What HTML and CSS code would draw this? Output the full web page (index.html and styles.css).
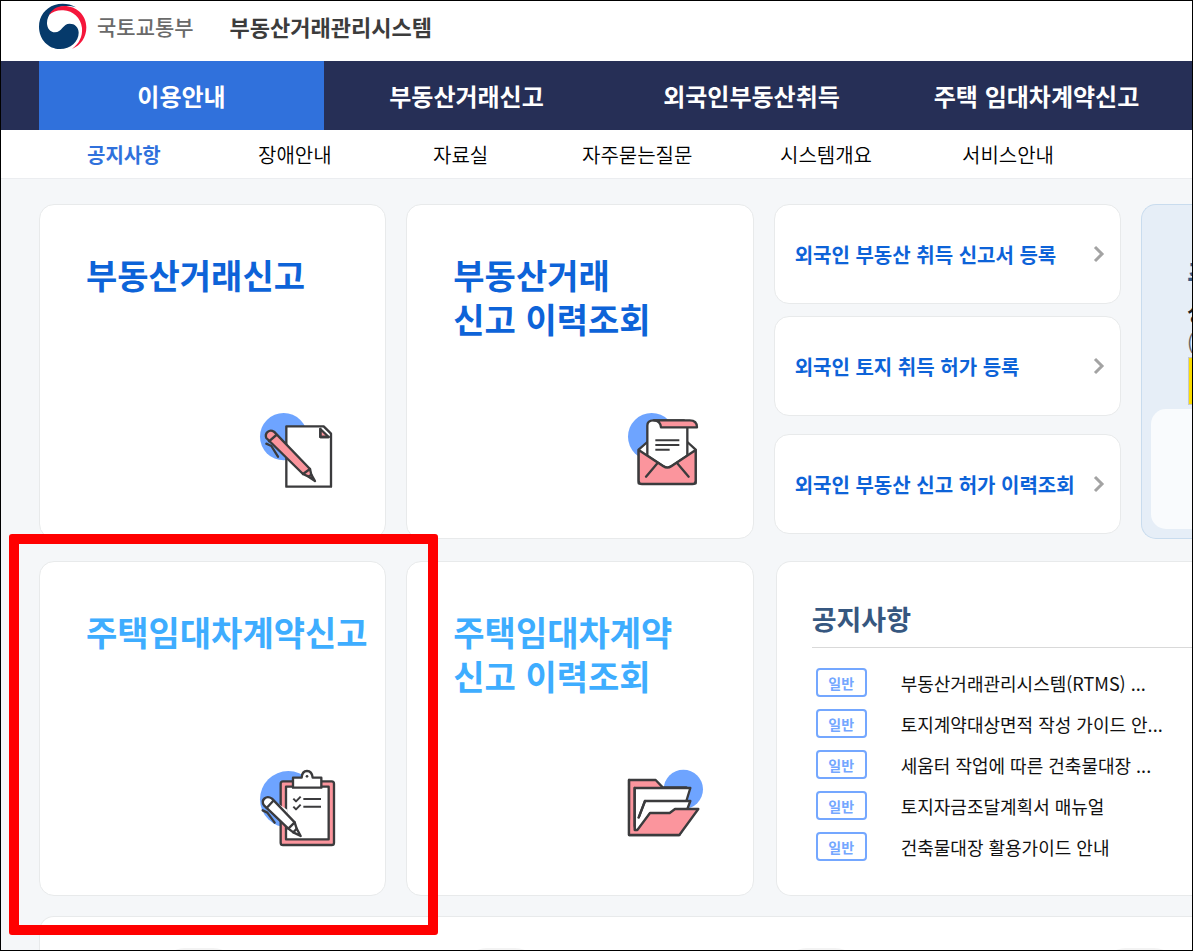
FILE: index.html
```html
<!DOCTYPE html>
<html lang="ko">
<head>
    <meta charset="UTF-8">
    <meta name="viewport" content="width=device-width, initial-scale=1.0">
    <title>부동산거래관리시스템</title>
    <link rel="stylesheet" href="styles.css">
</head>
<body>

<div class="page">
    <!-- Header -->
    <header class="header">
        <a class="logo" href="#">
            <svg class="logo-mark" viewBox="117 9 150 141" aria-hidden="true">
                <path fill="#063a6b" d="M228 22 C208 10 183 9 164 15 C136 24 117 49 117 80 C117 118 145 147 180 147 C212 147 236 125 236 98 C236 81 224 71 209 71 C189 71 185 97 165 97 C150 97 141 84 141 69 C141 45 160 24 190 19 C204 17 217 19 228 22 Z"/>
                <path fill="#f5163b" d="M147 45 C155 29 170 19 192 18 C230 18 259 45 259 82 C259 112 243 136 216 147 C238 130 248 110 246 84 C242 53 220 33 190 31 C172 30 158 35 147 45 Z"/>
            </svg>
            <span class="logo-name">국토교통부</span>
        </a>
        <a class="system-name" href="#">부동산거래관리시스템</a>
    </header>

    <!-- Main menu -->
    <nav class="main-nav">
        <a class="active" href="#">이용안내</a>
        <a href="#">부동산거래신고</a>
        <a href="#">외국인부동산취득</a>
        <a href="#">주택 임대차계약신고</a>
    </nav>

    <!-- Sub menu -->
    <nav class="sub-nav">
        <a class="active" href="#">공지사항</a>
        <a href="#">장애안내</a>
        <a href="#">자료실</a>
        <a href="#">자주묻는질문</a>
        <a href="#">시스템개요</a>
        <a href="#">서비스안내</a>
    </nav>

    <main class="main">
        <div class="card-grid">
            <a class="card service" href="#">
                <span class="service-title">부동산거래신고</span>
                <svg class="service-icon" viewBox="48 45 240 240" aria-hidden="true">
                    <circle cx="131" cy="125" r="71" fill="#6ea4ff"/>
                    <path class="paper" d="M139 94 H251 L273 116 V275 H139 Z"/>
                    <path class="pink" d="M241 102 V126 H266 Z"/>
                    <path class="line" d="M241 102 V126 H266"/>
                    <path class="pink" d="M79 129 C73 114 88 101 102 110 L210 222 L214 239 L225 258 L206 245 L189 237 Z"/>
                    <path class="line" d="M189 237 L210 222 M206 245 L214 239 M87 139 L109 120 M79 146 L94 153 L114 185"/>
                </svg>
            </a>

            <a class="card service" href="#">
                <span class="service-title">부동산거래<br>신고 이력조회</span>
                <svg class="service-icon" viewBox="42 45 240 240" aria-hidden="true">
                    <circle cx="125" cy="125" r="71" fill="#6ea4ff"/>
                    <path class="paper" d="M86 164 L112 141 H232 L257 164 V265 H86 Z"/>
                    <path class="paper" d="M112 182 V92 C112 81 120 76 130 76 H222 L232 96 V182 L184 214 Q172 222 160 214 Z"/>
                    <path class="pink" d="M132 76 H239 C253 76 261 83 261 97 H153 C152 84 145 77 132 76 Z"/>
                    <path class="pink" d="M86 165 L160 214 Q172 222 184 214 L257 165 V257 Q257 267 247 267 H96 Q86 267 86 257 Z"/>
                    <path class="line" d="M141 206 L108 245 M203 206 L236 245"/>
                    <path class="line thick" d="M136 136 H208 M136 150 H208 M136 164 H179"/>
                </svg>
            </a>

            <div class="link-list">
                <a class="card link-card" href="#">
                    <span>외국인 부동산 취득 신고서 등록</span>
                    <svg class="chevron" viewBox="0 0 12 18" aria-hidden="true"><path d="M2 2 L9 9 L2 16"/></svg>
                </a>
                <a class="card link-card" href="#">
                    <span>외국인 토지 취득 허가 등록</span>
                    <svg class="chevron" viewBox="0 0 12 18" aria-hidden="true"><path d="M2 2 L9 9 L2 16"/></svg>
                </a>
                <a class="card link-card" href="#">
                    <span>외국인 부동산 신고 허가 이력조회</span>
                    <svg class="chevron" viewBox="0 0 12 18" aria-hidden="true"><path d="M2 2 L9 9 L2 16"/></svg>
                </a>
            </div>

            <!-- Help panel, runs off the right side -->
            <aside class="help">
                <div class="help-text">
                    <strong class="help-title">주</strong>
                    <strong class="help-name">상</strong>
                    <span class="help-note">(</span>
                    <div class="help-mark"></div>
                </div>
                <div class="help-box"></div>
            </aside>

            <a class="card service lease" href="#">
                <span class="service-title">주택임대차계약신고</span>
                <svg class="service-icon" viewBox="48 36 240 240" aria-hidden="true">
                    <circle cx="145" cy="133" r="85" fill="#6ea4ff"/>
                    <rect class="pink" x="122" y="79" width="160" height="191" rx="7"/>
                    <rect class="paper" x="138" y="95" width="128" height="158"/>
                    <path class="paper" d="M159 98 V68 H185 Q186 48 201 48 Q216 48 218 68 H244 V98 Z"/>
                    <circle cx="201" cy="64" r="4" fill="#3b3b3d"/>
                    <path class="line thick" d="M190 132 H243 M190 155 H243 M160 131 L168 139 L182 125 M160 155 L168 163 L182 149"/>
                    <path class="gap" d="M116 148 L142 164 V190 L116 160 Z"/>
                    <path class="paper" d="M72 151 C61 135 79 119 96 131 L164 202 L170 221 L182 243 L160 232 L145 221 Z"/>
                    <path class="line" d="M145 221 L164 202 M160 232 L170 221 M80 159 L100 137 M68 166 L82 173 L104 203"/>
                </svg>
                <span class="highlight"></span>
            </a>

            <a class="card service lease" href="#">
                <span class="service-title">주택임대차계약<br>신고 이력조회</span>
                <svg class="service-icon" viewBox="42 36 240 240" aria-hidden="true">
                    <circle cx="220" cy="103" r="59" fill="#6ea4ff"/>
                    <path class="pink" d="M57 75 H137 L158 97 H229 V200 L208 240 H57 Z"/>
                    <path class="paper" d="M74 99 H241 L229 138 V170 H120 L82 225 H74 Z"/>
                    <path class="paper" d="M86 188 L105 138 H241 L232 162 L180 175 H120 L100 205" stroke-linecap="round"/>
                    <path fill="#fb959d" d="M60 237 V190 L74 225 H82 L120 174 H179 L195 162 H265 L208 240 Z"/>
                    <path fill="#fff" d="M78 190 L86 188 L100 198 L82 222 H78 Z"/>
                    <path class="line" d="M57 75 V240 H208 L265 162 H195 L179 174 H120 L82 225 H74 V99 M86 188 L105 138"/>
                </svg>
            </a>

            <!-- Notices -->
            <section class="card notice">
                <h2>공지사항</h2>
                <ul>
                    <li><span class="badge">일반</span><a href="#">부동산거래관리시스템(RTMS) ...</a></li>
                    <li><span class="badge">일반</span><a href="#">토지계약대상면적 작성 가이드 안...</a></li>
                    <li><span class="badge">일반</span><a href="#">세움터 작업에 따른 건축물대장 ...</a></li>
                    <li><span class="badge">일반</span><a href="#">토지자금조달계획서 매뉴얼</a></li>
                    <li><span class="badge">일반</span><a href="#">건축물대장 활용가이드 안내</a></li>
                </ul>
            </section>
        </div>

        <section class="card shortcuts">
            <div class="shortcut"></div>
            <div class="shortcut"></div>
            <div class="shortcut"></div>
            <div class="shortcut"></div>
        </section>
    </main>
</div>

</body>
</html>
```

FILE: styles.css
```css
* { box-sizing: border-box; }
body { margin: 0; font-family: "Noto Sans CJK KR", sans-serif; color: #111; background-color: #fff; }
a { color: inherit; text-decoration: none; }
.page { height: 100vh; border: 1px solid #000; overflow: hidden; }

/* Header */
.header { display: flex; align-items: center; height: 60px; padding: 0 38px 10px; }
.logo { display: flex; align-items: center; gap: 8px; }
.logo-mark { width: 50px; height: 47px; }
.logo-name { font-size: 21px; font-weight: 500; color: #6a6a6a; }
.system-name { margin-left: 36px; font-size: 22px; font-weight: 700; color: #3c3c3c; }

/* Menus */
.main-nav { display: flex; height: 69px; padding: 0 13px 0 38px; background-color: #262f56; }
.main-nav a { flex: 1; display: flex; align-items: center; justify-content: center; font-size: 24px; font-weight: 700; color: #fff; white-space: nowrap; }
.main-nav a.active { background-color: #3071dc; }
.sub-nav { display: grid; grid-template-columns: 171fr 175fr 149fr 198fr 182fr 230fr; align-items: center; height: 49px; padding-left: 86px; border-bottom: 1px solid #ebedf0; }
.sub-nav a { font-size: 20px; font-weight: 350; color: #000; white-space: nowrap; }
.sub-nav a.active { font-weight: 700; color: #3071dc; }

/* Cards */
.main { min-height: 100vh; padding: 25px 0 0 38px; background-color: #f5f7f9; }
.card-grid { display: grid; grid-template-columns: repeat(3, minmax(0, 1fr)) 51px; gap: 22px 20px; }
.card { background-color: #fff; border: 1px solid #e8eaeb; border-radius: 15px; }
.service { position: relative; display: flex; flex-direction: column; justify-content: space-between; min-height: 335px; padding: 48px 49px 48px 46px; }
.service-title { font-size: 34px; line-height: 44px; font-weight: 700; color: #0d63d8; white-space: nowrap; }
.lease .service-title { color: #3eadff; }
.service-icon { width: 80px; height: 80px; align-self: flex-end; }
.service-icon .paper { fill: #fff; stroke: #3b3b3d; stroke-width: 7; stroke-linejoin: round; }
.service-icon .pink { fill: #fb959d; stroke: #3b3b3d; stroke-width: 7; stroke-linejoin: round; }
.service-icon .line { fill: none; stroke: #3b3b3d; stroke-width: 7; stroke-linejoin: round; stroke-linecap: round; }
.service-icon .thick { stroke-width: 6; stroke-linecap: butt; }
.service-icon .gap { fill: #fff; }
.highlight { position: absolute; z-index: 1; top: -28px; right: -53px; bottom: -40px; left: -31px; border: 10px solid #f00; border-radius: 3px; }

/* Link cards */
.link-list { display: flex; flex-direction: column; gap: 12px; }
.link-card { display: flex; align-items: center; justify-content: space-between; height: 100px; padding: 0 15px 0 20px; font-size: 20px; font-weight: 700; color: #0d63d8; white-space: nowrap; }
.link-card:last-child { margin-top: 6px; }
.chevron { width: 12px; height: 18px; fill: none; stroke: #a3a3a3; stroke-width: 3; }

/* Help panel */
.help { display: flex; flex-direction: column; justify-content: space-between; padding: 50px 0 9px 9px; border: 1px solid #c9dcee; border-right: 0; border-radius: 15px 0 0 15px; background-color: #e6eef7; overflow: hidden; }
.help-text { display: flex; flex-direction: column; padding-left: 36px; white-space: nowrap; }
.help-title { font-size: 30px; line-height: 38px; font-weight: 700; color: #365780; }
.help-name { font-size: 24px; line-height: 36px; font-weight: 500; color: #222; }
.help-note { font-size: 20px; line-height: 28px; color: #666; }
.help-mark { height: 48px; margin-left: 1px; border: 1px solid #c8c8c8; border-right: 0; background-color: #fbdd00; }
.help-box { height: 120px; border-radius: 15px 0 0 15px; background-color: #f9fbfd; }

/* Notices */
.notice { grid-column: 3 / 5; margin-left: 2px; padding: 37px 0 0 35px; border-right: 0; border-radius: 15px 0 0 15px; }
.notice h2 { margin: 0; padding-bottom: 8px; border-bottom: 1px solid #d9d9d9; font-size: 27px; line-height: 40px; font-weight: 700; color: #365780; }
.notice ul { display: flex; flex-direction: column; gap: 12px; margin: 0; padding: 20px 0 0 4px; list-style: none; }
.notice li { display: flex; align-items: center; gap: 34px; height: 29px; font-size: 18px; white-space: nowrap; }
.badge { display: flex; align-items: center; justify-content: center; width: 51px; height: 29px; border: 2px solid #74a7ff; border-radius: 4px; font-size: 14px; line-height: 20px; font-weight: 700; color: #74a7ff; }

/* Shortcuts */
.shortcuts { display: grid; grid-template-columns: 302fr 321fr 319fr 90fr; height: 200px; margin-top: 20px; padding: 31px 0 0 121px; border-right: 0; border-radius: 15px 0 0 0; }
.shortcut { width: 76px; height: 76px; border-radius: 24px; background-color: #f3f3f3; }
```
